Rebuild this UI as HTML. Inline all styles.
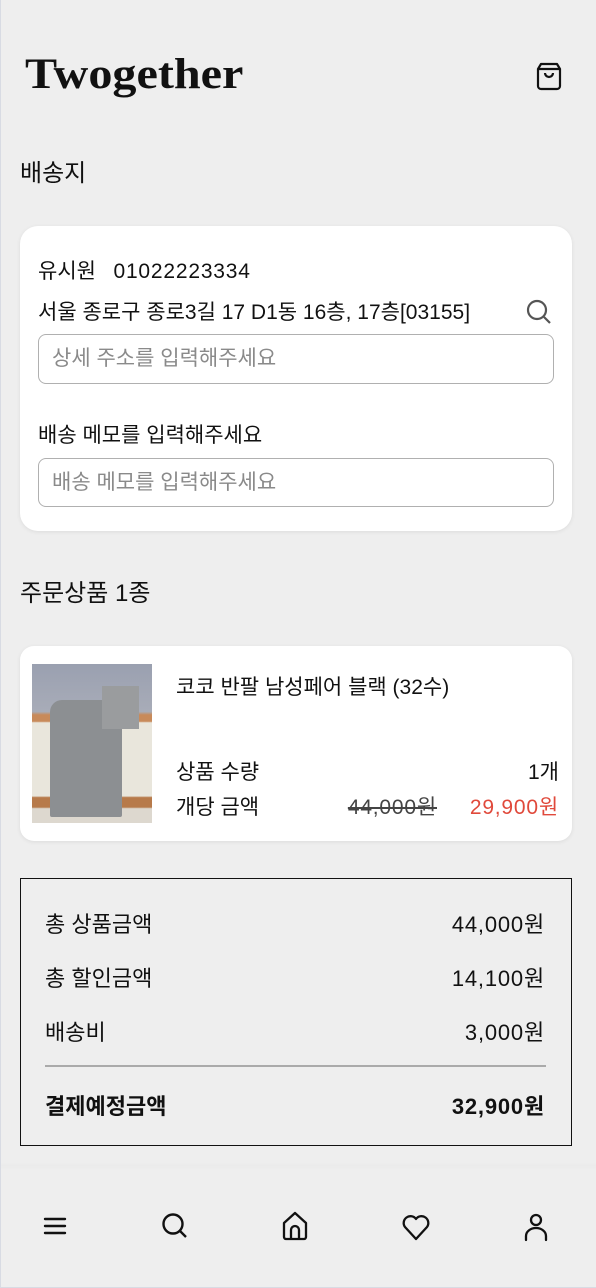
<!DOCTYPE html>
<html><head><meta charset="utf-8"><style>
*{margin:0;padding:0;box-sizing:border-box}
body{width:596px;height:1288px;background:#eeeeee;font-family:"Liberation Sans","Noto Sans CJK KR",sans-serif;color:#111;position:relative;overflow:hidden;border-left:1px solid #d8dbe3;border-bottom:1px solid #d8dbe3}
.a{position:absolute;white-space:nowrap}
.card{position:absolute;background:#fff;border-radius:18px;box-shadow:0 1px 4px rgba(0,0,0,.08)}
.inp{position:absolute;border:1.5px solid #b0b0b0;border-radius:8px;background:#fff;color:#8a8a8a;font-size:21px;padding-left:13px;line-height:47px}
.t20{font-size:21px}
.n{letter-spacing:0.8px}
.s{font-size:22px}
</style></head><body>
<div class="a" style="left:24px;top:50px;font-family:'Liberation Serif',serif;font-weight:bold;font-size:43px;transform:scaleX(1.12);transform-origin:left">Twogether</div>
<svg class="a" style="left:534px;top:60px" width="30" height="32" viewBox="0 0 30 32" fill="none" stroke="#111" stroke-width="2.2" stroke-linejoin="round"><path d="M6 4h16l3 5v17a3 3 0 0 1-3 3H6a3 3 0 0 1-3-3V9z"/><path d="M3 9h22"/><path d="M10 13a4 4 0 0 0 8 0"/></svg>

<div class="a" style="left:19px;top:153px;font-size:24px">배송지</div>
<div class="card" style="left:19px;top:226px;width:552px;height:305px"></div>
<div class="a t20" style="left:37px;top:255px">유시원&nbsp;&nbsp; <span class="n">01022223334</span></div>
<div class="a t20" style="left:37px;top:296px">서울 종로구 종로3길 17 D1동 16층, 17층[03155]</div>
<svg class="a" style="left:524px;top:298px" width="28" height="28" viewBox="0 0 28 28" fill="none" stroke="#555" stroke-width="2.2"><circle cx="12" cy="12" r="9"/><path d="M19 19l6 6"/></svg>
<div class="inp" style="left:37px;top:334px;width:516px;height:50px">상세 주소를 입력해주세요</div>
<div class="a t20" style="left:37px;top:419px">배송 메모를 입력해주세요</div>
<div class="inp" style="left:37px;top:458px;width:516px;height:49px">배송 메모를 입력해주세요</div>

<div class="a" style="left:19px;top:573px;font-size:24px">주문상품 1종</div>
<div class="card" style="left:19px;top:646px;width:552px;height:195px;border-radius:14px"></div>
<div class="a" style="left:31px;top:664px;width:120px;height:159px;background:linear-gradient(#9aa0b0 0,#a8acb8 30%,#c88a5a 32%,#c88a5a 36%,#e9e6dc 37%,#e9e6dc 83%,#b77a4a 84%,#b77a4a 90%,#ddd8cf 91%)"></div>
<div class="a" style="left:49px;top:700px;width:72px;height:117px;background:#8c8f92;border-radius:12px 12px 2px 2px"></div>
<div class="a" style="left:101px;top:686px;width:37px;height:43px;background:#9a9c9e"></div>
<div class="a t20" style="left:175px;top:671px">코코 반팔 남성페어 블랙 (32수)</div>
<div class="a t20" style="left:175px;top:756px">상품 수량</div>
<div class="a t20" style="right:37px;top:756px">1개</div>
<div class="a t20" style="left:175px;top:791px">개당 금액</div>
<div class="a t20 n" style="right:159px;top:791px;color:#444;text-decoration:line-through">44,000원</div>
<div class="a t20 n" style="right:37px;top:791px;color:#e0493b">29,900원</div>

<div class="a" style="left:19px;top:878px;width:552px;height:268px;border:1.5px solid #111"></div>
<div class="a s" style="left:44px;top:907px">총 상품금액</div>
<div class="a s n" style="right:51px;top:907px">44,000원</div>
<div class="a s" style="left:44px;top:961px">총 할인금액</div>
<div class="a s n" style="right:51px;top:961px">14,100원</div>
<div class="a s" style="left:44px;top:1015px">배송비</div>
<div class="a s n" style="right:51px;top:1015px">3,000원</div>
<div class="a" style="left:44px;top:1065px;width:501px;height:1.5px;background:#aaa"></div>
<div class="a s" style="left:44px;top:1089px;font-weight:bold">결제예정금액</div>
<div class="a s n" style="right:51px;top:1089px;font-weight:bold">32,900원</div>

<div class="a" style="left:0;top:1162px;width:596px;height:8px;background:linear-gradient(#eeeeee,#ebebeb,#eeeeee)"></div>
<svg class="a" style="left:42px;top:1216px" width="24" height="20" viewBox="0 0 24 20" stroke="#111" stroke-width="2.4" stroke-linecap="round"><path d="M2 3h20M2 10h20M2 17h20"/></svg>
<svg class="a" style="left:160px;top:1212px" width="28" height="28" viewBox="0 0 28 28" fill="none" stroke="#111" stroke-width="2.4"><circle cx="12" cy="12" r="9.5"/><path d="M19 19l6 6"/></svg>
<svg class="a" style="left:280px;top:1211px" width="28" height="30" viewBox="0 0 28 30" fill="none" stroke="#111" stroke-width="2.3" stroke-linejoin="round"><path d="M3 12L14 2l11 10v14a2 2 0 0 1-2 2H5a2 2 0 0 1-2-2z"/><path d="M10 28v-9a4 4 0 0 1 8 0v9"/></svg>
<svg class="a" style="left:400px;top:1213px" width="30" height="28" viewBox="0 0 30 28" fill="none" stroke="#111" stroke-width="2.3" stroke-linejoin="round"><path d="M15 26L4 14a6.5 6.5 0 0 1 11-8 6.5 6.5 0 0 1 11 8z"/></svg>
<svg class="a" style="left:522px;top:1212px" width="26" height="30" viewBox="0 0 26 30" fill="none" stroke="#111" stroke-width="2.3" stroke-linecap="round"><circle cx="13" cy="8" r="5"/><path d="M3 28v-4a10 8 0 0 1 20 0v4"/></svg>
</body></html>
